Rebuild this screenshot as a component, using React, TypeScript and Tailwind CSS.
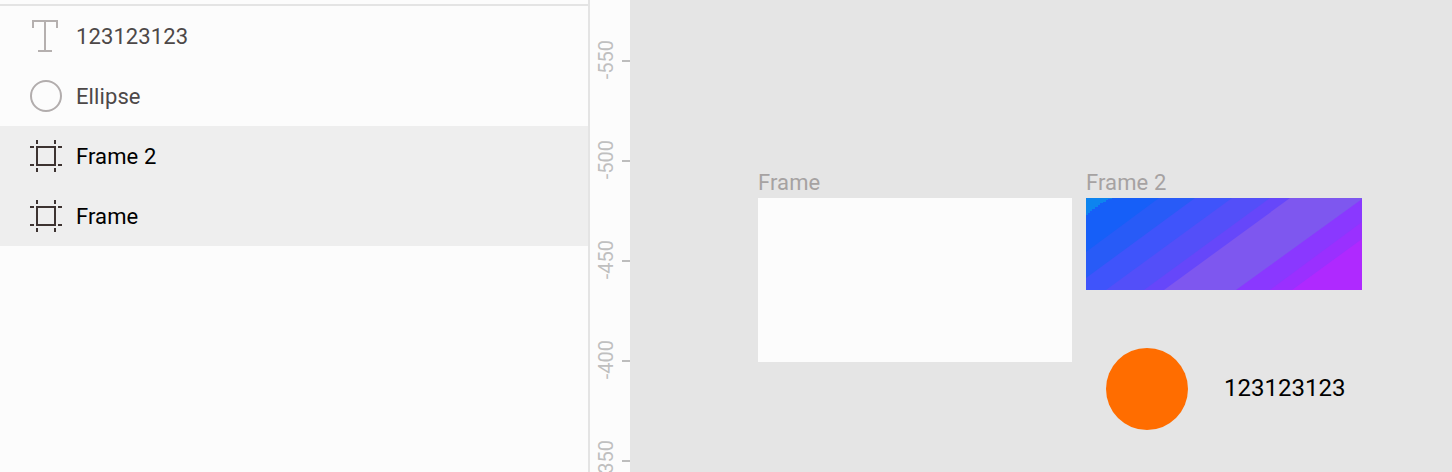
import React from "react";

type LayerKind = "text" | "ellipse" | "frame";

function LayerIcon({ kind }: { kind: LayerKind }) {
  return (
    <svg width="32" height="32" viewBox="0 0 32 32" fill="none" className="shrink-0">
      {kind === "text" && (
        <path d="M3 8V1H27V8M15 1V31M8 31H22" stroke="#b5b0af" strokeWidth="2" />
      )}
      {kind === "ellipse" && <circle cx="16" cy="16" r="15" stroke="#b2adad" strokeWidth="2" />}
      {kind === "frame" && (
        <path
          d="M7 7H25V25H7ZM7 0V4M25 0V4M7 28V32M25 28V32M0 7H4M28 7H32M0 25H4M28 25H32"
          stroke="#3d3331"
          strokeWidth="2"
        />
      )}
    </svg>
  );
}

const layers: { name: string; kind: LayerKind; selected: boolean }[] = [
  { name: "123123123", kind: "text", selected: false },
  { name: "Ellipse", kind: "ellipse", selected: false },
  { name: "Frame 2", kind: "frame", selected: true },
  { name: "Frame", kind: "frame", selected: true },
];

const marks = ["-550", "-500", "-450", "-400", "-350"];

function LayersPanel() {
  return (
    <aside className="flex w-[590px] shrink-0 flex-col border-r-2 border-[#e4e4e4] bg-[#fcfcfc] pt-1">
      <div className="h-0.5 shrink-0 bg-[#e4e4e4]" />
      {layers.map((layer) => (
        <div
          key={layer.name}
          className={
            layer.selected
              ? "flex h-[60px] items-center gap-[14px] bg-[#eeeeee] pl-[30px] text-black"
              : "flex h-[60px] items-center gap-[14px] pl-[30px] text-[#4d4848]"
          }
        >
          <LayerIcon kind={layer.kind} />
          <span className="pt-0.5 text-[22px] leading-[30px] tracking-[0.1px]">{layer.name}</span>
        </div>
      ))}
    </aside>
  );
}

function Ruler() {
  return (
    <div className="flex w-10 shrink-0 flex-col overflow-hidden bg-[#fcfcfc] pt-[11px]">
      {marks.map((mark) => (
        <div key={mark} className="flex h-[100px] shrink-0 items-center justify-between pl-1">
          <span className="mb-0.5 rotate-180 text-[20px] leading-6 text-[#bfbfbf] [writing-mode:vertical-rl]">
            {mark}
          </span>
          <span className="h-0.5 w-2 bg-[#bdbdbd]" />
        </div>
      ))}
    </div>
  );
}

function BandedGradient() {
  return (
    <svg width="276" height="92" viewBox="0 0 276 92" className="block">
      <path fill="#af29ff" d="M0 0H276V92H0Z" />
      <path fill="#9a30ff" d="M0 0H276V41L206 92H0Z" />
      <path fill="#8a38ff" d="M0 0H276V24L184 92H0Z" />
      <path fill="#7e57ef" d="M0 0H276V1L150 92H0Z" />
      <path fill="#6647fa" d="M0 0H204L78 92H0Z" />
      <path fill="#534ff9" d="M0 0H184L58 92H0Z" />
      <path fill="#3f54fb" d="M0 0H146L20 92H0Z" />
      <path fill="#285bf7" d="M0 0H109L0 80Z" />
      <path fill="#165ff8" d="M0 0H73L0 54Z" />
      <path
        fill="#0d84ef"
        d="M0 0H26V1H22V2H20V4H17V5H14V7H12V9H9V11H6V13H4V15H2V17H0Z"
      />
    </svg>
  );
}

function Canvas() {
  return (
    <main className="relative flex-1 overflow-hidden bg-[#e5e5e5]">
      <div className="absolute left-32 top-[168px]">
        <div className="h-[30px] text-[22px] leading-[30px] tracking-[0.1px] text-[#a6a2a2]">Frame</div>
        <div className="h-[164px] w-[314px] bg-[#fcfcfc]" />
      </div>
      <div className="absolute left-[456px] top-[168px]">
        <div className="h-[30px] text-[22px] leading-[30px] tracking-[0.1px] text-[#a6a2a2]">Frame 2</div>
        <BandedGradient />
      </div>
      <div className="absolute left-[476px] top-[348px] size-[82px] rounded-full bg-[#ff6d00]" />
      <div className="absolute left-[594px] top-[374px] text-[24px] leading-7 text-black">123123123</div>
    </main>
  );
}

export default function App() {
  return (
    <div className="flex h-[472px] w-[1452px] overflow-hidden font-[Roboto,sans-serif]">
      <LayersPanel />
      <Ruler />
      <Canvas />
    </div>
  );
}
